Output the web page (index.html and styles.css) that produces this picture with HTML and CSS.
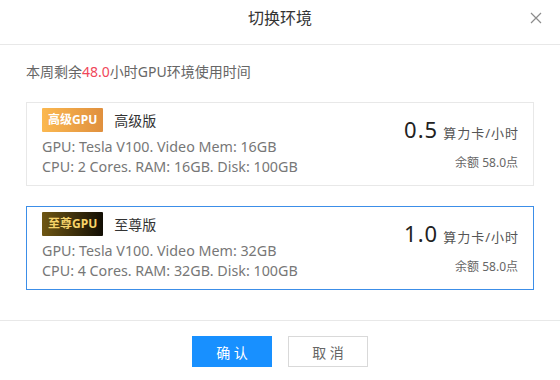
FILE: index.html
```html
<!DOCTYPE html>
<html lang="zh">
<head>
<meta charset="utf-8">
<link rel="stylesheet" href="styles.css">
</head>
<body>
<div class="dialog">
  <div class="header">
    <div class="title">切换环境</div>
    <button class="close" aria-label="close">
      <svg width="12" height="12" viewBox="0 0 12 12"><path d="M1 1L11 11M11 1L1 11" stroke="#8c8c8c" stroke-width="1.2" fill="none"/></svg>
    </button>
  </div>
  <div class="body">
    <div class="info">本周剩余<span class="red">48.0</span>小时GPU环境使用时间</div>
    <div class="card">
      <div class="left">
        <div class="head"><span class="badge gold">高级GPU</span><span class="name">高级版</span></div>
        <div class="spec">GPU: Tesla V100. Video Mem: 16GB</div>
        <div class="spec">CPU: 2 Cores. RAM: 16GB. Disk: 100GB</div>
      </div>
      <div class="right">
        <div class="price"><span class="num">0.5</span><span class="unit">算力卡/小时</span></div>
        <div class="balance">余额 58.0点</div>
      </div>
    </div>
    <div class="card selected">
      <div class="left">
        <div class="head"><span class="badge dark">至尊GPU</span><span class="name">至尊版</span></div>
        <div class="spec">GPU: Tesla V100. Video Mem: 32GB</div>
        <div class="spec">CPU: 4 Cores. RAM: 32GB. Disk: 100GB</div>
      </div>
      <div class="right">
        <div class="price"><span class="num">1.0</span><span class="unit">算力卡/小时</span></div>
        <div class="balance">余额 58.0点</div>
      </div>
    </div>
  </div>
  <div class="footer">
    <button class="btn primary">确 认</button>
    <button class="btn">取 消</button>
  </div>
</div>
</body>
</html>
```
FILE: styles.css
```css
html, body {
  margin: 0;
  padding: 0;
  background: #fff;
}
body {
  font-family: "Noto Sans", "Noto Sans CJK SC", sans-serif;
  color: #333;
}
.dialog {
  width: 560px;
  height: 380px;
}
.header {
  position: relative;
  height: 44px;
  border-bottom: 1px solid #e8e8e8;
}
.title {
  line-height: 36px;
  text-align: center;
  font-size: 16px;
  color: #333;
}
.close {
  position: absolute;
  right: 18px;
  top: 12px;
  width: 12px;
  height: 12px;
  padding: 0;
  border: 0;
  background: none;
  display: flex;
}
.body {
  padding: 17px 26px 30px;
}
.info {
  font-size: 14px;
  line-height: 20px;
  color: #666;
  margin-bottom: 20px;
}
.red {
  color: #f0475a;
}
.card {
  display: flex;
  justify-content: space-between;
  border: 1px solid #e8e8e8;
  padding: 5px 14px 8px 15px;
  margin-bottom: 20px;
}
.card:last-child {
  margin-bottom: 0;
}
.card.selected {
  border-color: #3c8ee8;
}
.head {
  display: flex;
  align-items: center;
  height: 24px;
  margin-bottom: 5px;
}
.badge {
  display: inline-block;
  height: 24px;
  line-height: 24px;
  padding: 0 6px;
  font-size: 12px;
  font-weight: bold;
  border-radius: 1px;
}
.badge.gold {
  color: #fff;
  background: linear-gradient(90deg, #fbb850, #e0903e);
}
.badge.dark {
  color: #f7d46a;
  background: linear-gradient(90deg, #6e5613, #120e04);
}
.name {
  margin-left: 11px;
  font-size: 14px;
  color: #333;
}
.spec {
  font-size: 14.3px;
  line-height: 20px;
  color: #777;
}
.right {
  text-align: right;
  padding-top: 8px;
}
.price {
  line-height: 26px;
}
.num {
  font-size: 22px;
  letter-spacing: 1px;
  color: #222;
}
.unit {
  font-size: 13px;
  letter-spacing: 1px;
  color: #555;
  margin-left: 5px;
}
.balance {
  margin-top: 8px;
  font-size: 12px;
  line-height: 18px;
  color: #666;
  padding-right: 1px;
}
.footer {
  border-top: 1px solid #e8e8e8;
  padding-top: 15px;
  display: flex;
  justify-content: center;
  gap: 16px;
}
.btn {
  width: 80px;
  height: 31px;
  border: 1px solid #d9d9d9;
  background: #fff;
  color: #666;
  font-family: "Noto Sans", "Noto Sans CJK SC", sans-serif;
  font-size: 14px;
  padding: 0;
  border-radius: 0;
}
.btn.primary {
  background: #1890ff;
  border-color: #1890ff;
  color: #fff;
}
```
